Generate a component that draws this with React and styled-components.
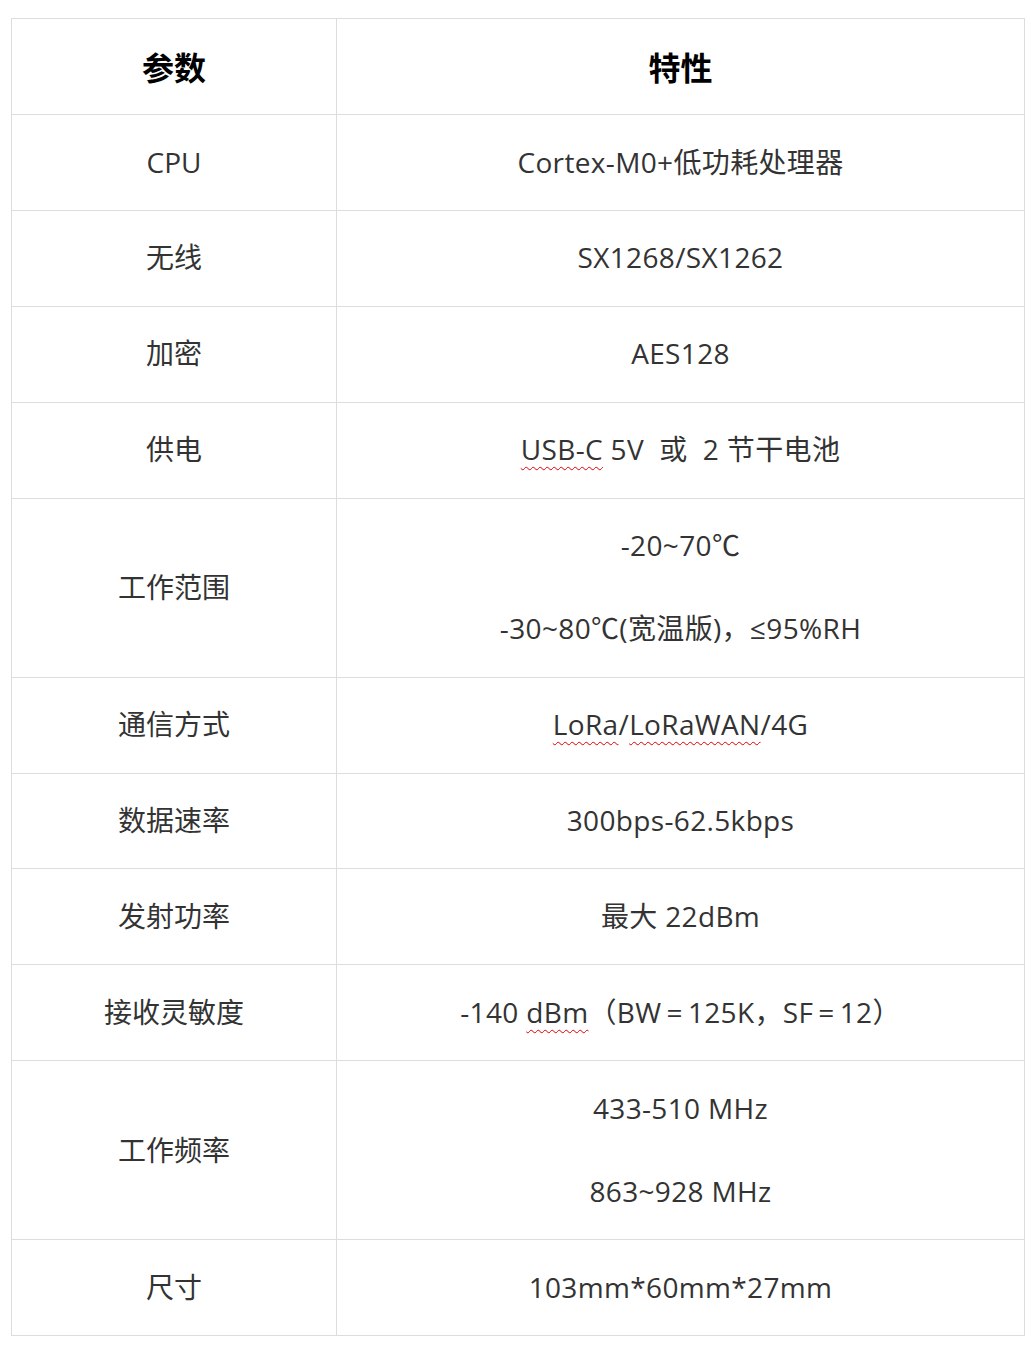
import React from "react";
import styled, { createGlobalStyle } from "styled-components";

const Global = createGlobalStyle`
  html, body { margin: 0; padding: 0; background: #fff; }
  body { font-family: "Open Sans", "Noto Sans CJK SC", sans-serif; }
`;

const Page = styled.div`
  padding: 18px 11px 16px 11px;
`;

const Table = styled.table`
  width: 1014px;
  border-collapse: collapse;
  table-layout: fixed;
  font-family: "Open Sans", "Noto Sans CJK SC", sans-serif;
  font-size: 28px;
  line-height: 41.6px;
  color: #333;
`;

const HeadCell = styled.th`
  border: 1px solid #dddddd;
  padding: 26.67px 8px;
  height: 41.6px;
  text-align: center;
  font-weight: 700;
  font-size: 32px;
  color: #000;
  font-family: "Noto Sans CJK SC", sans-serif;
  width: ${(p) => p.$w || "auto"};
`;

const Cell = styled.td`
  border: 1px solid #dddddd;
  padding: 26.67px 8px;
  text-align: center;
  vertical-align: middle;
  letter-spacing: ${(p) => (p.$wide ? "0.35px" : "0")};
`;

const Line = styled.div`
  min-height: 41.6px;
`;

const Spell = styled.span`
  text-decoration: underline wavy #e00000;
  text-decoration-thickness: 1px;
  text-underline-offset: 6px;
`;

const rows = [
  ["CPU", [<>Cortex-M0+低功耗处理器</>]],
  ["无线", [<>SX1268/SX1262</>]],
  ["加密", [<>AES128</>]],
  ["供电", [<><Spell>USB-C</Spell> 5V&nbsp; 或&nbsp; 2 节干电池</>]],
  ["工作范围", [<>-20~70℃</>, null, <>-30~80℃(宽温版)，≤95%RH</>]],
  ["通信方式", [<><Spell>LoRa</Spell>/<Spell>LoRaWAN</Spell>/4G</>]],
  ["数据速率", [<>300bps-62.5kbps</>]],
  ["发射功率", [<>最大 22dBm</>]],
  ["接收灵敏度", [<>-140 <Spell>dBm</Spell>（BW{"\u2009"}={"\u2009"}125K，SF{"\u2009"}={"\u2009"}12）</>]],
  ["工作频率", [<>433-510 MHz</>, null, <>863~928 MHz</>]],
  ["尺寸", [<>103mm*60mm*27mm</>]],
];

export default function App() {
  return (
    <Page>
      <Global />
      <Table>
        <thead>
          <tr>
            <HeadCell $w="308px">参数</HeadCell>
            <HeadCell>特性</HeadCell>
          </tr>
        </thead>
        <tbody>
          {rows.map(([k, lines]) => (
            <tr key={k}>
              <Cell>{k}</Cell>
              <Cell $wide>
                {lines.length === 1
                  ? lines[0]
                  : lines.map((l, i) => <Line key={i}>{l}</Line>)}
              </Cell>
            </tr>
          ))}
        </tbody>
      </Table>
    </Page>
  );
}
